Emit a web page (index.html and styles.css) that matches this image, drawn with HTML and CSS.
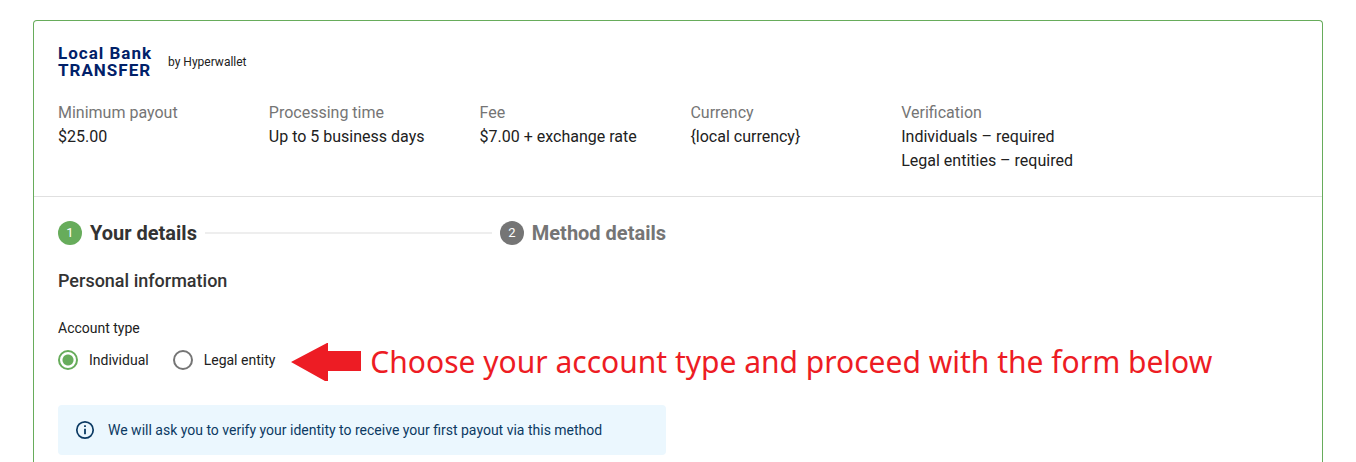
FILE: index.html
```
<!DOCTYPE html>
<html lang="en">

<head>
    <meta charset="utf-8">
    <title>Local Bank Transfer</title>
    <link rel="stylesheet" href="styles.css">
</head>

<body>

    <div class="card">
        <div class="summary">
            <div class="brand">
                <div class="logo">Local Bank<br>TRANSFER</div>
                <span class="provider">by Hyperwallet</span>
            </div>

            <dl class="facts">
                <div class="fact">
                    <dt>Minimum payout</dt>
                    <dd>$25.00</dd>
                </div>
                <div class="fact">
                    <dt>Processing time</dt>
                    <dd>Up to 5 business days</dd>
                </div>
                <div class="fact">
                    <dt>Fee</dt>
                    <dd>$7.00 + exchange rate</dd>
                </div>
                <div class="fact">
                    <dt>Currency</dt>
                    <dd>{local currency}</dd>
                </div>
                <div class="fact">
                    <dt>Verification</dt>
                    <dd>Individuals – required</dd>
                    <dd>Legal entities – required</dd>
                </div>
            </dl>
        </div>

        <form class="details">
            <div class="steps">
                <span class="step-number active">1</span>
                <span class="step-title active">Your details</span>
                <span class="step-line"></span>
                <span class="step-number">2</span>
                <span class="step-title">Method details</span>
            </div>

            <h3>Personal information</h3>

            <fieldset>
                <legend>Account type</legend>
                <div class="options">
                    <label class="option" for="individual">
                        <input type="radio" id="individual" name="accountType" checked>
                        Individual
                    </label>
                    <label class="option" for="legalEntity">
                        <input type="radio" id="legalEntity" name="accountType">
                        Legal entity
                    </label>
                    <div class="hint">
                        <svg width="70" height="38" viewBox="0 0 70 38" aria-hidden="true">
                            <path d="M0 19 L36 0 H37 V8 H70 V28 H37 V38 H34 Z" fill="#ed1c24" />
                        </svg>
                        <span>Choose your account type and proceed with the form below</span>
                    </div>
                </div>
            </fieldset>

            <div class="notice">
                <svg width="20" height="20" viewBox="0 0 20 20" aria-hidden="true">
                    <circle cx="10" cy="10" r="8.2" fill="none" stroke="#0b3a63" stroke-width="1.7" />
                    <path d="M9.1 5.2h1.8v1.8H9.1zM9.1 8.7h1.8v5.6H9.1z" fill="#0b3a63" />
                </svg>
                <span>We will ask you to verify your identity to receive your first payout via this method</span>
            </div>
        </form>
    </div>

</body>

</html>
```
FILE: styles.css
```
* {
    box-sizing: border-box;
}

body {
    margin: 0;
    padding: 20px 33px 0;
    background-color: #fff;
    color: #212121;
    font-family: Roboto, Arial, sans-serif;
    font-size: 16px;
    line-height: 24px;
}

.card {
    border: 1px solid #67ac5b;
    border-bottom: none;
    border-radius: 4px 4px 0 0;
}

.summary {
    padding: 24px 24px 23px;
    border-bottom: 1px solid #e0e0e0;
}

.brand {
    display: flex;
    align-items: center;
    gap: 16px;
    margin-bottom: 22px;
}

.logo {
    color: #012169;
    font-size: 17px;
    font-weight: bold;
    line-height: 17px;
    letter-spacing: 1px;
}

.provider {
    font-size: 12px;
    line-height: 16px;
}

.facts {
    display: flex;
    margin: 0;
}

.fact {
    width: 17%;
}

dt {
    color: #757575;
}

dd {
    margin: 0;
}

.details {
    padding: 24px 24px 7px;
}

.steps {
    display: flex;
    align-items: center;
    gap: 8px;
    width: calc(50% - 12px);
}

.step-number {
    width: 24px;
    height: 24px;
    border-radius: 50%;
    background-color: #757575;
    color: #fff;
    font-size: 13px;
    text-align: center;
}

.step-number.active {
    background-color: #67ac5b;
}

.step-title {
    color: #757575;
    font-size: 20px;
    font-weight: bold;
}

.step-title.active {
    color: #333;
}

.step-line {
    flex: 1;
    height: 2px;
    background-color: #eee;
}

h3 {
    margin: 24px 0 25px;
    color: #333;
    font-size: 18px;
    font-weight: 500;
}

fieldset {
    margin: 0;
    padding: 0;
    border: none;
    font-size: 14px;
    line-height: 20px;
}

legend {
    padding: 0;
}

.options {
    display: flex;
    align-items: center;
    height: 44px;
    gap: 24px;
}

.option {
    display: flex;
    align-items: center;
    gap: 11px;
}

input[type="radio"] {
    appearance: none;
    width: 20px;
    height: 20px;
    margin: 0;
    border: 2px solid #757575;
    border-radius: 50%;
}

input[type="radio"]:checked {
    border-color: #67ac5b;
    background: radial-gradient(circle, #67ac5b 5px, #fff 6px);
}

.hint {
    display: flex;
    align-items: center;
    gap: 9px;
    margin-left: -8px;
    padding-top: 4px;
    color: #ed1c24;
    font-family: "Noto Sans", "Open Sans", sans-serif;
    font-size: 30px;
    line-height: 40px;
    white-space: nowrap;
}

.notice {
    display: flex;
    align-items: center;
    gap: 13px;
    width: calc(50% - 12px);
    margin-top: 23px;
    padding: 15px 17px;
    border-radius: 4px;
    background-color: #ebf7fe;
    color: #0b3a63;
    font-size: 14px;
    line-height: 20px;
}
```
